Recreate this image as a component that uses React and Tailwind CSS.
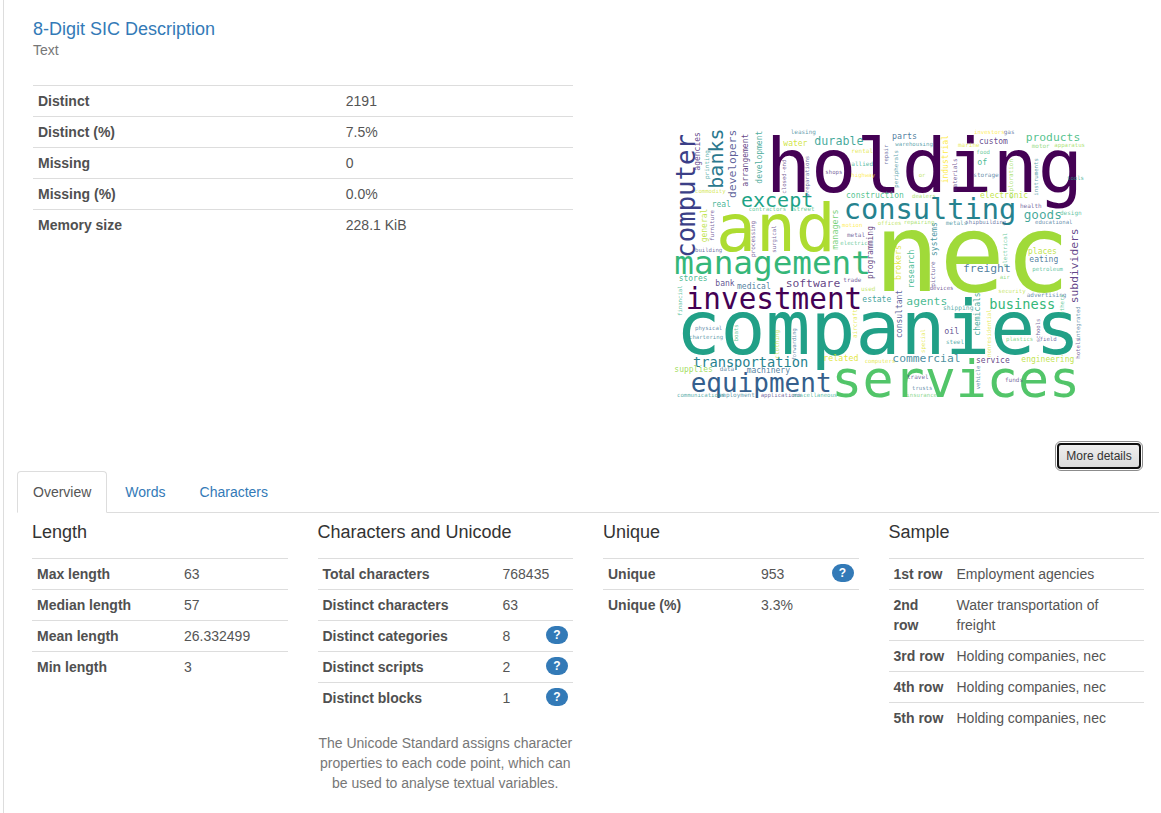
import React from "react";

// Words that run left to right: [text, ink left, ink right, baseline y, colour]
const ACROSS = [
  ["holding", 303, 1225, 202, "#440154"],
  ["leasing", 363, 435, 26, "#2a788e"],
  ["water", 342, 411, 62, "#c8e020"],
  ["except", 217, 427, 245, "#20a386"],
  ["real", 127, 182, 245, "#25a884"],
  ["contractors", 237, 349, 259, "#35b779"],
  ["street", 370, 432, 258, "#35b779"],
  ["commodity", 76, 168, 203, "#c8e020"],
  ["durable", 435, 576, 59, "#1f9a8a"],
  ["rental", 545, 606, 84, "#dde318"],
  ["allied", 545, 607, 122, "#21a585"],
  ["shops", 467, 517, 146, "#482878"],
  ["highway", 545, 616, 156, "#fde725"],
  ["parts", 668, 739, 41, "#31688e"],
  ["warehousing", 677, 790, 64, "#26828e"],
  ["construction", 530, 701, 219, "#35b779"],
  ["or", 747, 765, 155, "#addc30"],
  ["dealers", 727, 797, 220, "#90d743"],
  ["consulting", 527, 1030, 283, "#26828e"],
  ["investors", 913, 1005, 26, "#fde725"],
  ["gas", 1002, 1032, 26, "#3b528b"],
  ["custom", 929, 1014, 57, "#482878"],
  ["marine", 865, 927, 67, "#dde318"],
  ["food", 920, 959, 88, "#35b779"],
  ["of", 924, 951, 121, "#28ae80"],
  ["products", 1069, 1230, 47, "#35b779"],
  ["motor", 1086, 1138, 69, "#6ece58"],
  ["apparatus", 1154, 1245, 66, "#90d743"],
  ["storage", 911, 985, 156, "#31688e"],
  ["tools", 1192, 1242, 165, "#21a585"],
  ["electronic", 932, 1075, 218, "#b5de2b"],
  ["health", 1051, 1113, 248, "#46327e"],
  ["goods", 1064, 1174, 283, "#1f9a8a"],
  ["design", 1171, 1232, 270, "#28ae80"],
  ["and", 152, 484, 378, "#addc30"],
  ["building", 76, 157, 380, "#414487"],
  ["management", 20, 595, 446, "#35b779"],
  ["stores", 28, 111, 468, "#28ae80"],
  ["bank", 138, 193, 484, "#46327e"],
  ["medical", 203, 302, 491, "#31688e"],
  ["software", 349, 509, 487, "#481d6f"],
  ["investment", 53, 569, 553, "#440154"],
  ["motion", 517, 577, 306, "#fde725"],
  ["metal", 532, 583, 336, "#46327e"],
  ["electric", 512, 590, 359, "#35b779"],
  ["offices", 624, 695, 299, "#addc30"],
  ["repairing", 702, 792, 298, "#90d743"],
  ["devices", 780, 850, 495, "#482878"],
  ["nec", 635, 1178, 498, "#a0da39"],
  ["trade", 521, 572, 470, "#482878"],
  ["used", 574, 614, 497, "#addc30"],
  ["estate", 579, 664, 531, "#21918c"],
  ["agents", 711, 829, 540, "#28ae80"],
  ["metals", 828, 892, 299, "#26828e"],
  ["shipbuilding", 887, 1008, 298, "#3b528b"],
  ["educational", 1096, 1207, 297, "#31688e"],
  ["places", 1076, 1161, 386, "#b5de2b"],
  ["eating", 1080, 1165, 410, "#31688e"],
  ["freight", 881, 1018, 442, "#31688e"],
  ["petroleum", 1088, 1180, 438, "#28ae80"],
  ["air", 990, 1018, 462, "#6ece58"],
  ["security", 986, 1066, 504, "#b5de2b"],
  ["advertising", 1071, 1186, 516, "#31688e"],
  ["business", 961, 1155, 553, "#35b779"],
  ["companies", 33, 1213, 688, "#21a087"],
  ["physical", 76, 156, 615, "#31688e"],
  ["chartering", 58, 160, 641, "#2a788e"],
  ["transportation", 72, 410, 726, "#26828e"],
  ["supplies", 15, 128, 742, "#90d743"],
  ["data", 150, 190, 739, "#31688e"],
  ["machinery", 232, 359, 744, "#31688e"],
  ["equipment", 67, 480, 800, "#355f8d"],
  ["communications", 22, 165, 817, "#21918c"],
  ["employment", 147, 251, 817, "#2a788e"],
  ["applications", 273, 395, 817, "#46327e"],
  ["miscellaneous", 370, 504, 817, "#21a585"],
  ["related", 462, 563, 708, "#dde318"],
  ["computers", 585, 676, 715, "#dde318"],
  ["commercial", 669, 870, 712, "#2a788e"],
  ["services", 495, 1222, 816, "#52c569"],
  ["travel", 712, 774, 763, "#46327e"],
  ["trusts", 727, 787, 795, "#31688e"],
  ["insurance", 710, 800, 817, "#5ec962"],
  ["shipping", 820, 907, 554, "#21918c"],
  ["oil", 825, 866, 628, "#46327e"],
  ["steel", 829, 880, 656, "#21918c"],
  ["plastics", 1009, 1090, 647, "#5ec962"],
  ["field", 1110, 1160, 647, "#414487"],
  ["service", 920, 1019, 713, "#481d6f"],
  ["engineering", 1056, 1213, 711, "#b5de2b"],
  ["funds", 1006, 1057, 772, "#46327e"],
];

// Words that run bottom to top: [text, baseline x, ink bottom, ink top, colour]
const UPWARD = [
  ["computer", 75, 393, 31, "#3b3f87"],
  ["agencies", 90, 135, 21, "#482878"],
  ["printing", 116, 161, 79, "#21918c"],
  ["banks", 160, 187, 15, "#2a788e"],
  ["developers", 197, 217, 15, "#414487"],
  ["arrangement", 233, 183, 26, "#481d6f"],
  ["development", 275, 174, 17, "#2c9c8a"],
  ["closed-end", 349, 205, 103, "#481d6f"],
  ["general", 110, 350, 252, "#b5de2b"],
  ["furniture", 133, 346, 255, "#482878"],
  ["preparations", 418, 214, 95, "#414487"],
  ["repair", 655, 119, 60, "#414487"],
  ["peripherals", 683, 187, 74, "#26828e"],
  ["industrial", 835, 173, 33, "#fde725"],
  ["materials", 860, 197, 104, "#482475"],
  ["exploration", 1028, 220, 103, "#90d743"],
  ["instruments", 1103, 211, 99, "#26828e"],
  ["managers", 503, 372, 255, "#5ec962"],
  ["processing", 256, 395, 292, "#482878"],
  ["surgical", 318, 382, 302, "#482878"],
  ["financial", 36, 572, 482, "#28ae80"],
  ["programming", 608, 460, 302, "#481a6c"],
  ["systems", 801, 391, 295, "#26828e"],
  ["brokers", 692, 463, 362, "#dde318"],
  ["research", 733, 488, 374, "#28ae80"],
  ["picture", 794, 484, 412, "#46327e"],
  ["consultant", 695, 637, 495, "#414487"],
  ["electrical", 1012, 425, 325, "#35b779"],
  ["subdividers", 1223, 533, 310, "#482475"],
  ["others", 1182, 568, 508, "#35b779"],
  ["chemicals", 930, 630, 502, "#1f9a8a"],
  ["boats", 204, 648, 598, "#35b779"],
  ["clothing", 327, 700, 618, "#b5de2b"],
  ["forwarding", 378, 705, 608, "#31688e"],
  ["aircraft", 560, 638, 555, "#dde318"],
  ["special", 766, 683, 614, "#dde318"],
  ["nonresidential", 964, 695, 553, "#dde318"],
  ["schools", 1109, 651, 580, "#46327e"],
  ["hotels", 1230, 700, 640, "#482878"],
  ["integrated", 1230, 645, 543, "#31688e"],
  ["vehicle", 930, 792, 722, "#31688e"],
];

// Monospace advance is 0.602em, with about 0.07em of bearing at either end.
const sizeFor = (word, length) => Math.round(length / (word.length * 0.602 - 0.14));

// Small words are drawn a little fainter than the large ones.
const opacityFor = (size) => (size < 24 ? 0.75 : size < 40 ? 0.85 : 1);

function WordCloud() {
  return (
    <svg
      viewBox="-27 0 1272 840"
      role="img"
      aria-label="Word cloud"
      className="mx-auto block w-full max-w-[424px] overflow-visible font-['DejaVu_Sans_Mono',monospace]"
    >
      {ACROSS.map(([word, x0, x1, y, fill]) => {
        const size = sizeFor(word, x1 - x0);
        return (
          <text
            key={word}
            x={Math.round(x0 - size * 0.07)}
            y={y}
            fontSize={size}
            fill={fill}
            fillOpacity={opacityFor(size)}
          >
            {word}
          </text>
        );
      })}
      {UPWARD.map(([word, x, y0, y1, fill]) => {
        const size = sizeFor(word, y0 - y1);
        return (
          <text
            key={word}
            transform={`translate(${x} ${Math.round(y0 + size * 0.07)}) rotate(-90)`}
            fontSize={size}
            fill={fill}
            fillOpacity={opacityFor(size)}
          >
            {word}
          </text>
        );
      })}
    </svg>
  );
}

function HelpBadge({ label }) {
  return (
    <button
      type="button"
      aria-label={`About ${label}`}
      className="block h-[18px] w-[22px] rounded-[10px] bg-[#337ab7] text-center text-xs leading-[18px] font-bold text-white"
    >
      ?
    </button>
  );
}

function StatTable({ rows, labelWidth, help }) {
  return (
    <table className="w-full table-fixed border-separate border-spacing-0 text-left">
      <colgroup>
        <col className={labelWidth} />
        <col />
        {help && <col className="w-8" />}
      </colgroup>
      <tbody>
        {rows.map(([label, value, badge]) => (
          <tr key={label}>
            <th scope="row" className="border-t border-[#ddd] p-[5px] align-top font-bold text-[#505050]">
              {label}
            </th>
            <td className="border-t border-[#ddd] p-[5px] align-top">{value}</td>
            {help && (
              <td className="border-t border-[#ddd] p-[5px] align-top">
                {badge && <HelpBadge label={label} />}
              </td>
            )}
          </tr>
        ))}
      </tbody>
    </table>
  );
}

function Panel({ title, children }) {
  return (
    <section>
      <h4 className="mb-4 text-lg leading-5 text-[#333]">{title}</h4>
      {children}
    </section>
  );
}

const SUMMARY = [
  ["Distinct", "2191"],
  ["Distinct (%)", "7.5%"],
  ["Missing", "0"],
  ["Missing (%)", "0.0%"],
  ["Memory size", "228.1 KiB"],
];
const LENGTH = [
  ["Max length", "63"],
  ["Median length", "57"],
  ["Mean length", "26.332499"],
  ["Min length", "3"],
];
const UNICODE = [
  ["Total characters", "768435"],
  ["Distinct characters", "63"],
  ["Distinct categories", "8", true],
  ["Distinct scripts", "2", true],
  ["Distinct blocks", "1", true],
];
const UNIQUE = [
  ["Unique", "953", true],
  ["Unique (%)", "3.3%"],
];
const SAMPLE = [
  ["1st row", "Employment agencies"],
  ["2nd row", "Water transportation of freight"],
  ["3rd row", "Holding companies, nec"],
  ["4th row", "Holding companies, nec"],
  ["5th row", "Holding companies, nec"],
];

export default function App() {
  return (
    <div className="min-h-screen bg-white pl-[3px] font-['Liberation_Sans',Arial,sans-serif] text-sm leading-5 text-[#555]">
      <main className="min-h-screen border-l border-[#ddd] pt-[19px] pr-0.5 pl-[13px]">
        <div className="grid grid-cols-2 gap-[30px] px-4">
          <div>
            <h3 className="text-lg leading-5">
              <a href="#description" className="text-[#337ab7]">8-Digit SIC Description</a>
            </h3>
            <p className="mt-px mb-[25px] text-[#777]">Text</p>
            <StatTable rows={SUMMARY} labelWidth="w-[57%]" />
          </div>
          <div className="pt-[106px]">
            <WordCloud />
          </div>
        </div>
        <div className="mt-[38px] flex justify-end pr-[18px]">
          <button
            type="button"
            className="h-[26px] w-[84px] rounded border-2 border-[#101010] bg-linear-to-b from-[#eee] to-[#dcdcdc] text-xs text-[#333] outline-1 outline-offset-1 outline-[#8c8c8c]"
          >
            More details
          </button>
        </div>
        <nav className="mt-0.5 flex gap-0.5 border-b border-[#ddd]">
          <a href="#overview" className="-mb-px rounded-t border border-[#ddd] border-b-white bg-white px-[15px] py-2.5 text-[#555]">
            Overview
          </a>
          <a href="#words" className="-mb-px border border-transparent px-[15px] py-2.5 text-[#337ab7]">Words</a>
          <a href="#characters" className="-mb-px border border-transparent px-[15px] py-2.5 text-[#337ab7]">Characters</a>
        </nav>
        <div className="grid grid-cols-4 gap-[30px] px-[15px] pt-[9px]">
          <Panel title="Length">
            <StatTable rows={LENGTH} labelWidth="w-[147px]" />
          </Panel>
          <Panel title="Characters and Unicode">
            <StatTable rows={UNICODE} labelWidth="w-[180px]" help />
            <p className="mt-5 text-center text-[#777]">
              The Unicode Standard assigns character properties to each code point, which can be used to analyse
              textual variables.
            </p>
          </Panel>
          <Panel title="Unique">
            <StatTable rows={UNIQUE} labelWidth="w-[153px]" help />
          </Panel>
          <Panel title="Sample">
            <StatTable rows={SAMPLE} labelWidth="w-[63px]" />
          </Panel>
        </div>
      </main>
    </div>
  );
}
